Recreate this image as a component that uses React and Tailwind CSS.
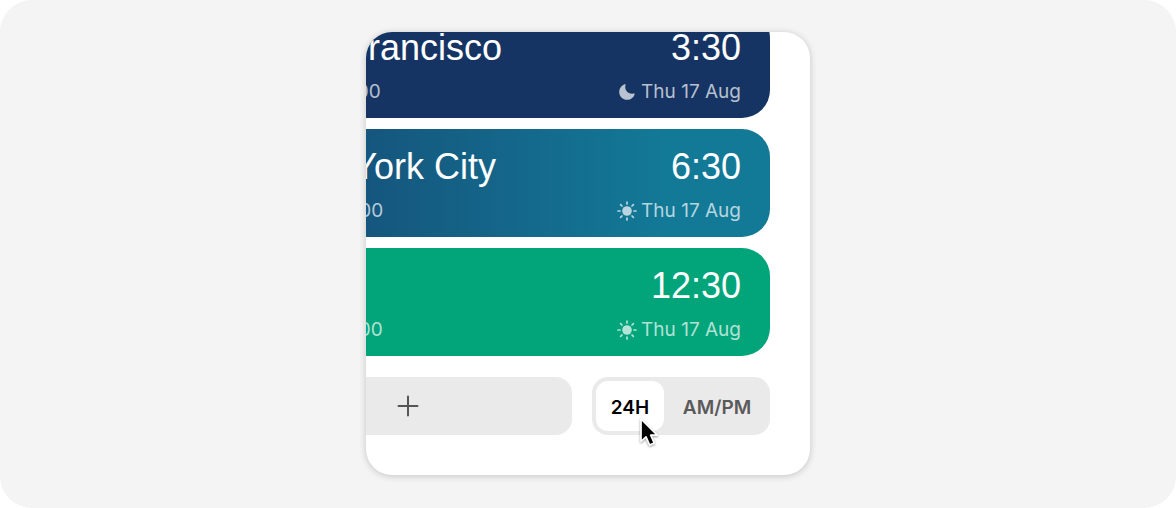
import React, { useState } from "react";

const cities = [
  {
    name: "San Francisco",
    offset: "UTC −07:00",
    time: "3:30",
    date: "Thu 17 Aug",
    day: false,
    tone: "bg-[#163463]",
  },
  {
    name: "New York City",
    offset: "UTC −04:00",
    time: "6:30",
    date: "Thu 17 Aug",
    day: true,
    tone: "bg-linear-to-r from-[#154e78] from-10% to-[#127997] to-80%",
  },
  {
    name: "Paris",
    offset: "UTC +02:00",
    time: "12:30",
    date: "Thu 17 Aug",
    day: true,
    tone: "bg-[#02a47a]",
  },
];

function SunIcon() {
  return (
    <svg viewBox="0 0 20 20" className="size-5" aria-hidden="true">
      <circle cx="10" cy="10" r="4.8" fill="currentColor" />
      <g stroke="currentColor" strokeWidth="1.7" strokeLinecap="round">
        <path d="M10 1v2M10 17v2M1 10h2M17 10h2M3.6 3.6l1.4 1.4M15 15l1.4 1.4M3.6 16.4L5 15M15 5l1.4-1.4" />
      </g>
    </svg>
  );
}

function MoonIcon() {
  return (
    <svg viewBox="0 0 20 20" className="size-5" aria-hidden="true">
      <path
        d="M7.7 2.2C8.2 1.9 8.7 2.3 8.5 2.9C7.1 7.6 11.1 12.6 16.6 11.6C17.3 11.4 17.8 11.8 17.6 12.4C16.6 15.5 13.7 17.8 10.2 17.8C5.7 17.8 2.2 14.3 2.2 9.9C2.2 6.4 4.5 3.3 7.7 2.2Z"
        fill="currentColor"
      />
    </svg>
  );
}

function CityRow({ city }) {
  return (
    <li
      className={`flex h-[108px] justify-between rounded-[28px] pt-[18px] pr-[29px] pl-7 text-white ${city.tone}`}
    >
      <div className="flex flex-col gap-3">
        <h2 className="text-4xl leading-10">{city.name}</h2>
        <p className="font-[Inter,sans-serif] text-[19px] leading-6 text-white/70">{city.offset}</p>
      </div>
      <div className="flex flex-col items-end gap-3">
        <p className="text-4xl leading-10">{city.time}</p>
        <p className="flex items-center gap-1 font-[Inter,sans-serif] text-[19px] leading-6 text-white/70">
          {city.day ? <SunIcon /> : <MoonIcon />}
          {city.date}
        </p>
      </div>
    </li>
  );
}

function Toggle() {
  const [mode, setMode] = useState("24H");
  const on = "bg-white text-black";
  const off = "text-[#5a5a5a]";
  return (
    <div
      role="group"
      aria-label="Time format"
      className="flex w-[178px] gap-1 rounded-2xl bg-[#eaeaea] p-1 font-[Inter,sans-serif] text-[19px] font-semibold"
    >
      <button
        type="button"
        aria-pressed={mode === "24H"}
        onClick={() => setMode("24H")}
        className={`w-[68px] rounded-xl pt-1 ${mode === "24H" ? on : off}`}
      >
        24H
      </button>
      <button
        type="button"
        aria-pressed={mode === "AM/PM"}
        onClick={() => setMode("AM/PM")}
        className={`flex-1 rounded-xl pt-1 ${mode === "AM/PM" ? on : off}`}
      >
        AM/PM
      </button>
    </div>
  );
}

function Cursor() {
  return (
    <svg
      viewBox="0 0 20 30"
      className="pointer-events-none absolute right-[151px] bottom-[28px] h-[30px] w-5 drop-shadow-[0_1px_1px_rgba(0,0,0,0.4)]"
      aria-hidden="true"
    >
      <path
        d="M2 2V24.5L7 19.8L10.6 28L15.2 26L11.7 18.2H18.3Z"
        fill="black"
        stroke="white"
        strokeWidth="1.7"
        strokeLinejoin="round"
      />
    </svg>
  );
}

export default function App() {
  return (
    <main className="flex min-h-screen items-start justify-center rounded-[32px] bg-[#f4f4f4] pt-8 font-['Liberation_Sans',Arial,sans-serif]">
      <section
        aria-label="World clock"
        className="relative flex aspect-[444/443] w-full max-w-[444px] flex-col items-end justify-end overflow-hidden rounded-[26px] bg-white pr-10 pb-10 shadow-[0_1px_7px_rgba(0,0,0,0.2)]"
      >
        <div className="flex w-[526px] flex-col gap-[21px]">
          <ul className="flex flex-col gap-[11px]">
            {cities.map((city) => (
              <CityRow key={city.name} city={city} />
            ))}
          </ul>
          <div className="flex h-[58px] gap-5">
            <button
              type="button"
              aria-label="Add city"
              className="flex flex-1 items-center justify-center rounded-2xl bg-[#eaeaea] text-[#555555]"
            >
              <svg viewBox="0 0 22 22" className="size-[22px]" aria-hidden="true">
                <path d="M11 1.5v19M1.5 11h19" stroke="currentColor" strokeWidth="2" strokeLinecap="round" />
              </svg>
            </button>
            <Toggle />
          </div>
        </div>
        <Cursor />
      </section>
    </main>
  );
}
